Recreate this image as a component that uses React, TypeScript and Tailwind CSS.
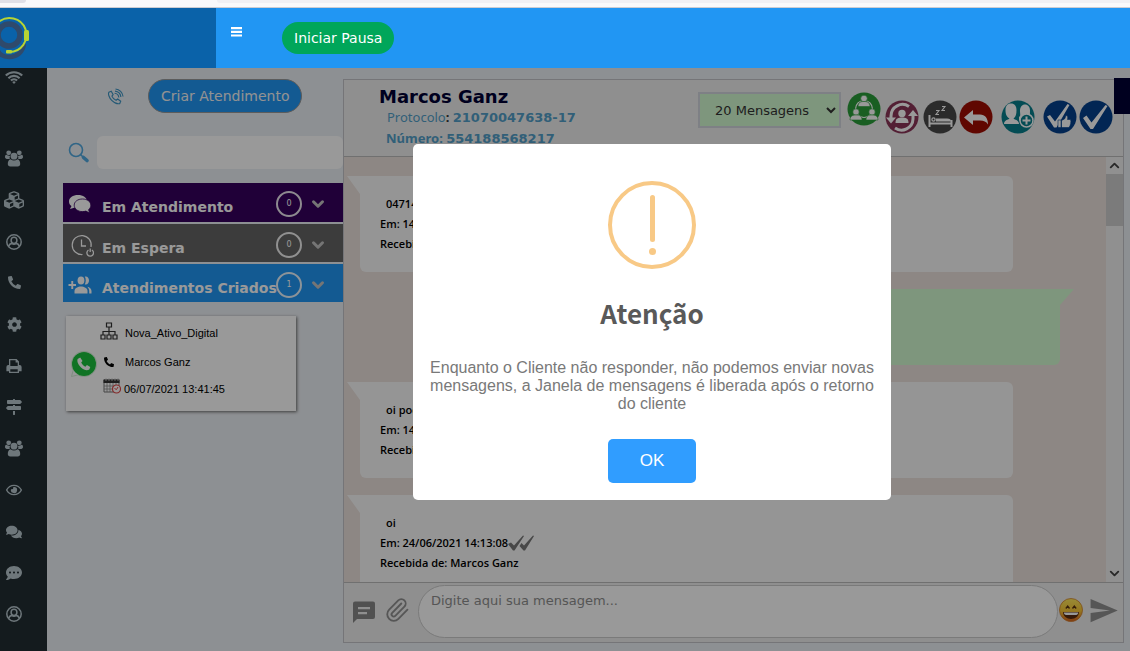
import { useState, type ReactNode } from 'react'
import { FaCubes, FaPhoneAlt, FaCog, FaMapSigns, FaRegEye, FaComments, FaCommentDots } from 'react-icons/fa'
import { MdSend } from 'react-icons/md'
import { ChevronDown, ChevronUp, Paperclip } from 'lucide-react'

type Message = {
  id: number
  side: 'in' | 'out'
  text?: string
  date?: string
  from?: string
  read?: boolean
}

const MESSAGES: Message[] = [
  { id: 1, side: 'in', text: '04714', date: '14/06/2021', from: 'Marcos Ganz' },
  { id: 2, side: 'out' },
  { id: 3, side: 'in', text: 'oi pode', date: '14/06/2021', from: 'Marcos Ganz' },
  { id: 4, side: 'in', text: 'oi', date: '24/06/2021 14:13:08', from: 'Marcos Ganz', read: true },
]

function WifiIcon() {
  return (
    <svg viewBox="0 0 18 13" className="w-[18px] h-[13px]" fill="none" stroke="currentColor" strokeWidth="2.100">
      <path d="M0.8 4.6a11.6 11.6 0 0 1 16.4 0" />
      <path d="M3.4 7.2a7.9 7.9 0 0 1 11.2 0" />
      <path d="M5.9 9.6a4.4 4.4 0 0 1 6.2 0" />
      <path d="M9 13 7.2 11.1a2.6 2.6 0 0 1 3.6 0z" fill="currentColor" stroke="none" />
    </svg>
  )
}

function UsersIcon() {
  return (
    <svg viewBox="0 0 18 17" className="w-[18px] h-[17px]" fill="currentColor">
      <circle cx="3.700" cy="2.800" r="2.400" />
      <circle cx="14.300" cy="2.800" r="2.400" />
      <path d="M5.300 5.800C4.600 6.700 4.500 7.700 4.800 8.900H1.900C.7 8.900 0 8.200 0 7.100c0-1.300.3-2.300 1.300-2.300 1.300 1 3 1.300 4 1zM12.700 5.800c.7.900.8 1.900.5 3.100h2.900c1.200 0 1.900-.7 1.900-1.800 0-1.300-.3-2.300-1.300-2.300-1.300 1-3 1.300-4 1z" />
      <circle cx="9" cy="6.200" r="3.400" />
      <path d="M5.600 9.300c2 1.600 4.800 1.600 6.800 0 2 .3 2.800 2.500 2.800 4.700 0 1.600-1 2.500-2.500 2.500H5.300c-1.500 0-2.500-.9-2.500-2.500 0-2.200.8-4.400 2.800-4.700z" />
    </svg>
  )
}

function UserCircleIcon() {
  return (
    <svg viewBox="0 0 16 16" className="w-4 h-4" fill="none" stroke="currentColor">
      <circle cx="8" cy="8" r="7.200" strokeWidth="1.500" />
      <ellipse cx="8" cy="6.300" rx="2.900" ry="3.100" strokeWidth="1.500" />
      <path d="M2.600 12.400C3.300 10.600 4.300 9.600 5.700 9.400 7 10.400 9 10.400 10.300 9.400c1.400.2 2.400 1.200 3.100 3" strokeWidth="1.600" />
    </svg>
  )
}

function PrintIcon() {
  return (
    <svg viewBox="0 0 16 16" className="w-4 h-4" fill="currentColor">
      <path fillRule="evenodd" d="M3 1h7.6L13 3.6V7h.6A2 2 0 0 1 15.6 9v4.2H13V15H3v-1.800H.4V9a2 2 0 0 1 2-2H3zM4.300 2.300V8h7.400V4.600H9.600V2.300zM4.300 11.200v2.500h7.400v-2.500z" />
    </svg>
  )
}

const MENU: { label: string; icon: ReactNode }[] = [
  { label: 'Grupos', icon: <UsersIcon /> },
  { label: 'Módulos', icon: <FaCubes size={20} /> },
  { label: 'Perfil', icon: <UserCircleIcon /> },
  { label: 'Telefone', icon: <FaPhoneAlt size={13} /> },
  { label: 'Configurações', icon: <FaCog size={15} /> },
  { label: 'Imprimir', icon: <PrintIcon /> },
  { label: 'Rotas', icon: <FaMapSigns size={16} /> },
  { label: 'Equipes', icon: <UsersIcon /> },
  { label: 'Monitorar', icon: <FaRegEye size={16} /> },
  { label: 'Conversas', icon: <FaComments size={16} /> },
  { label: 'Mensagens', icon: <FaCommentDots size={16} /> },
  { label: 'Conta', icon: <UserCircleIcon /> },
]

function Logo() {
  return (
    <svg viewBox="0 0 30 46" className="w-[30px] h-[46px]" fill="none">
      <circle cx="9" cy="20" r="11" stroke="#2f4a6c" strokeWidth="5.500" />
      <path d="M24 29c-1 8-7 13-15 13-5 0-9-2-11-6" stroke="#2f4a6c" strokeWidth="4.500" />
      <path d="M-2 7.500A17 17 0 1 1 9 37" stroke="#b7d334" strokeWidth="2" />
      <rect x="24" y="15" width="5" height="11" rx="1.500" fill="#b7d334" />
      <rect x="6" y="35" width="6" height="3.400" rx="1" fill="#b7d334" />
    </svg>
  )
}

function Header() {
  return (
    <header className="relative z-50 flex h-[60px] shrink-0 bg-[#2196f3]">
      <a href="#" aria-label="Início" className="flex w-[216px] items-center bg-[#0a62a9]">
        <Logo />
      </a>
      <button aria-label="Menu" className="ml-[15px] mt-[18px] h-3 w-[11px] text-white">
        <svg viewBox="0 0 11 10" className="w-[11px] h-[10px]" fill="currentColor">
          <path d="M0 0h11v2.200H0zM0 3.700h11v2.200H0zM0 7.400h11v2.200H0z" />
        </svg>
      </button>
      <button className="ml-10 mt-[14px] h-8 rounded-full bg-[#00a65a] px-3 text-[14px] text-white">
        Iniciar Pausa
      </button>
    </header>
  )
}

function Sidebar() {
  return (
    <aside className="flex w-[47px] shrink-0 flex-col bg-[#222d32] text-[#b8c7ce]">
      <a href="#" aria-label="Conexão" className="flex h-[19px] w-7 items-center justify-center">
        <WifiIcon />
      </a>
      <nav className="mt-[51px] flex flex-1 flex-col pb-4">
        {MENU.map((item) => (
          <a key={item.label} href="#" aria-label={item.label} className="flex w-7 flex-1 items-center justify-center">
            {item.icon}
          </a>
        ))}
      </nav>
    </aside>
  )
}

function CallIcon() {
  return (
    <svg viewBox="0 0 18 18" className="w-[17px] h-[17px]" fill="none" stroke="#3d95c4" strokeWidth="1.200">
      <path d="M4.500 3.500 2 4.500C1 6 2 10 5 13s6.500 4 8.500 3.500l1-2.500-3.200-2.300-1.800 1.300C8 12.500 5.800 10 5.200 8.600L6.500 7z" />
      <path d="M8 5.500a5 5 0 0 1 4.500 4.500M8.500 3.300a7 7 0 0 1 6.200 6.200M9 1a9 9 0 0 1 8 8" />
    </svg>
  )
}

function SearchIcon() {
  return (
    <svg viewBox="0 0 22 22" className="w-[22px] h-[22px]" fill="none" stroke="#50a8e0">
      <circle cx="8" cy="8" r="6.500" strokeWidth="1.600" />
      <path d="M12.500 12.500l3 3" strokeWidth="1.600" />
      <path d="M15.500 15.500l3.500 3" strokeWidth="3.600" strokeLinecap="round" />
    </svg>
  )
}

function BubblesIcon() {
  return (
    <svg viewBox="0 0 24 20" className="w-6 h-5">
      <path d="M10 1c5 0 9 2.600 9 6.500S15 14 10 14c-1 0-2-.1-3-.4L2 15l1.500-3C2 11 1 9.500 1 7.500 1 3.600 5 1 10 1z" fill="#fff" />
      <path d="M14.500 5c4.700 0 8.300 2.600 8.300 6.200 0 1.800-.8 3.300-2.200 4.400L21.500 19l-3.600-1.900c-1 .3-2.200.5-3.400.5-4.700 0-8.300-2.800-8.300-6.400S9.800 5 14.500 5z" fill="#fff" stroke="#36005e" strokeWidth=".8" />
    </svg>
  )
}

function WaitIcon() {
  return (
    <svg viewBox="0 0 26 24" className="w-[26px] h-6" fill="none" stroke="#fff">
      <path d="M14.500 21.500A9.500 9.500 0 1 1 23 14" strokeWidth="1.200" />
      <path d="M13.500 6.500V13H18" strokeWidth="1.300" />
      <path d="M20.500 17a3.300 3.300 0 1 0 3.400 0M22.200 15.500v3.500" strokeWidth="1.300" />
    </svg>
  )
}

function GroupAddIcon() {
  return (
    <svg viewBox="0 0 24 20" className="w-6 h-5" fill="#fff">
      <path d="M3.300 6h1.900v3H8v1.900H5.200v3H3.300v-3H.5V9h2.800z" />
      <ellipse cx="13" cy="5.500" rx="3.400" ry="4" />
      <path d="M6.500 18.500v-2.500c0-3 3.500-4.500 6.500-4.500s6.500 1.500 6.500 4.500v2.500z" />
      <path d="M16.800 1.600c2.600-.6 4.200 1.400 4.200 3.900s-1.600 4.500-4.200 3.900c1.300-2.300 1.300-5.500 0-7.800zM19.300 11.700c2.400.6 4.200 2 4.200 4.300v2.500h-2.300V16c0-1.700-.7-3.200-1.900-4.300z" />
    </svg>
  )
}

type QueueProps = { label: string; count: number; icon: ReactNode; className: string }

function Queue({ label, count, icon, className }: QueueProps) {
  return (
    <button className={`flex h-[38px] w-full items-center pt-[3px] text-left text-white ${className}`}>
      <span className="flex w-[39px] shrink-0 pl-[5px]">{icon}</span>
      <span className="min-w-0 flex-1 whitespace-nowrap pt-[6px] text-[14px] font-bold leading-5">{label}</span>
      <span className="flex size-[26px] shrink-0 items-center justify-center rounded-full border-2 border-white/90 text-[8px]">
        {count}
      </span>
      <ChevronDown size={18} strokeWidth={4} className="ml-[7px] mr-4 shrink-0 text-[#c4c4c4]" />
    </button>
  )
}

function SitemapIcon() {
  return (
    <svg viewBox="0 0 18 18" className="w-[18px] h-[18px]" fill="none" stroke="#333" strokeWidth="1.200">
      <path d="M6.500 1h5v4h-5zM9 5v8M3 13V9.500h12V13M1 13h4v4H1zM7 13h4v4H7zM13 13h4v4h-4z" />
    </svg>
  )
}

function CalendarIcon() {
  return (
    <svg viewBox="0 0 18 16" className="w-[18px] h-4" fill="none">
      <path d="M1 2h15v12H1z" fill="#fff" stroke="#777" />
      <path d="M.5 1.500h16v3.500H.5z" fill="#333" />
      <path d="M3 0v3M6 0v3M9 0v3M12 0v3M15 0v3" stroke="#ccc" strokeWidth=".8" />
      <path d="M1 8h15M1 11h15M4 5v9M7 5v9M10 5v9M13 5v9" stroke="#888" strokeWidth=".8" />
      <circle cx="13.500" cy="11" r="4" fill="#fff" stroke="#e04848" strokeWidth="1.200" />
      <path d="M11.500 10.500l2 1 1.500-2.500" stroke="#e04848" />
    </svg>
  )
}

function WhatsappIcon() {
  return (
    <svg viewBox="0 0 28 28" className="w-7 h-7">
      <path d="M14 1.500a12.500 12.500 0 1 1-6 23.400L1.500 26.500l1.700-6.200A12.500 12.500 0 0 1 14 1.500z" fill="#fff" stroke="#c8e8cc" strokeWidth=".8" />
      <circle cx="14" cy="14" r="12" fill="#1cc03c" />
      <path d="M10.200 7.500 7.600 9c-1 3 1.200 6.400 3.700 8.700s5.600 3.300 8 1.800l1-2.400-3.400-2-1.500 1.600c-1.900-.7-3.300-2.200-4.200-4.100l1.300-1.600z" fill="#fff" />
    </svg>
  )
}

function ContactCard() {
  return (
    <article className="ml-[3px] mr-[47px] mt-[14px] flex h-[95px] items-start bg-white font-['Liberation_Sans',sans-serif] text-[11px] text-black shadow-[1px_1px_3px_#666]">
      <span className="ml-1 mt-[34px]">
        <WhatsappIcon />
      </span>
      <ul className="ml-[2px] flex flex-col">
        <li className="mt-[5px] flex h-5 items-center gap-[7px]">
          <SitemapIcon />
          <span className="pt-1">Nova_Ativo_Digital</span>
        </li>
        <li className="mt-[11px] flex h-5 items-center gap-[11px] pl-1">
          <FaPhoneAlt size={10} />
          <span>Marcos Ganz</span>
        </li>
        <li className="mt-[2px] flex h-6 items-center gap-[3px] pl-[3px]">
          <CalendarIcon />
          <span className="pt-[6px]">06/07/2021 13:41:45</span>
        </li>
      </ul>
    </article>
  )
}

function QueuePanel() {
  return (
    <section className="w-[280px] shrink-0">
      <div className="flex h-[34px] items-center">
        <button aria-label="Ligar" className="ml-11">
          <CallIcon />
        </button>
        <button className="ml-6 h-[34px] rounded-full border border-[#999] bg-[#2196f3] px-3 text-[14px] text-[#f4f4f4]">
          Criar Atendimento
        </button>
      </div>
      <div className="mt-[23px] flex h-[33px] items-center">
        <label htmlFor="busca" aria-label="Buscar" className="ml-[5px] w-[29px]">
          <SearchIcon />
        </label>
        <input id="busca" type="text" className="h-full min-w-0 flex-1 rounded-md bg-white px-2 text-[13px]" />
      </div>
      <div className="mt-[14px] flex flex-col gap-[2px]">
        <Queue label="Em Atendimento" count={0} icon={<BubblesIcon />} className="h-[39px] bg-[#36005e]" />
        <Queue label="Em Espera" count={0} icon={<WaitIcon />} className="bg-[#646464]" />
        <Queue label="Atendimentos Criados" count={1} icon={<GroupAddIcon />} className="bg-[#2196f3]" />
      </div>
      <ContactCard />
    </section>
  )
}

function TeamIcon() {
  return (
    <svg viewBox="0 0 34 34" className="w-[34px] h-[34px]">
      <circle cx="17" cy="17" r="16.500" fill="#2a9d3a" />
      <circle cx="17" cy="17" r="8.500" fill="none" stroke="#fff" strokeWidth="1.200" />
      <g fill="#fff" stroke="#2a9d3a" strokeWidth=".6">
        <circle cx="17" cy="6.500" r="3.300" />
        <path d="M11 14.500c0-4 2.500-5 6-5s6 1 6 5z" />
        <circle cx="9" cy="20" r="3.200" />
        <path d="M3 28c0-4 2.500-5 6-5s6 1 6 5z" />
        <circle cx="25" cy="20" r="3.200" />
        <path d="M19 28c0-4 2.500-5 6-5s6 1 6 5z" />
      </g>
    </svg>
  )
}

function TransferIcon() {
  return (
    <svg viewBox="0 0 34 34" className="w-[34px] h-[34px]" fill="none">
      <circle cx="17" cy="17" r="16.500" fill="#8a3558" />
      <path d="M6 19V16A11.500 11.500 0 0 1 24 6.500" stroke="#fff" strokeWidth="3" />
      <path d="M28 15v4a11.500 11.500 0 0 1-18 9" stroke="#fff" strokeWidth="3" />
      <path d="M1 17.500h10L6 23.500zM23 16h10L28 10z" fill="#fff" />
      <circle cx="17" cy="13.500" r="3.700" fill="#fff" />
      <path d="M10.500 23c0-5 3-5.500 6.500-5.500s6.500.5 6.500 5.500z" fill="#fff" />
    </svg>
  )
}

function SleepIcon() {
  return (
    <svg viewBox="0 0 34 34" className="w-[34px] h-[34px]" fill="none" stroke="#fff">
      <circle cx="17" cy="17" r="16.500" fill="#484848" stroke="none" />
      <path d="M6.500 15v12M28.500 20v7M6 23.500h23" strokeWidth="2" />
      <path d="M13 21.500v-3h11c3 0 4 1 4 3z" fill="#fff" stroke="none" />
      <circle cx="10.500" cy="19.500" r="1.600" strokeWidth="1.300" />
      <path d="M13 10.500h3l-3 4h3M19 6.500h3l-3 4h3" strokeWidth="1.100" />
    </svg>
  )
}

function BackIcon() {
  return (
    <svg viewBox="0 0 34 34" className="w-[34px] h-[34px]">
      <circle cx="17" cy="17" r="16.500" fill="#a00d02" />
      <path d="M5 17.500 14 10v4.500h7c5 0 8 3.500 8 10-2-3-4-4-8-4h-7V25z" fill="#fff" />
    </svg>
  )
}

function AddPeopleIcon() {
  return (
    <svg viewBox="0 0 34 34" className="w-[34px] h-[34px]">
      <circle cx="17" cy="17" r="16.500" fill="#087f8c" />
      <path d="M18 17c2-1 1-3 1-6 0-4 2-6.500 5-6.500s5 2.500 5 6c0 3-.5 4 1.500 6l-5 4H18z" fill="#fff" />
      <path d="M3 24c0-4 4-4 5.500-5.500C5 16.500 4.500 13 4.500 10c0-4 2-6.500 5.500-6.500S15.500 6 15.500 10s-.5 6.500-3 8.500C14 20 18 20 18 24z" fill="#fff" />
      <circle cx="25.500" cy="20.500" r="6.500" fill="#087f8c" stroke="#fff" strokeWidth="1.500" />
      <path d="M25.500 16.500v8M21.500 20.500h8" stroke="#fff" strokeWidth="2" />
    </svg>
  )
}

function ApproveIcon() {
  return (
    <svg viewBox="0 0 34 34" className="w-[34px] h-[34px]">
      <circle cx="17" cy="17" r="16.500" fill="#04408c" />
      <path d="M4 16.500 7 15l5 6.500L24.500 4l2 1L13.500 27.500h-2.500z" fill="#fff" />
      <path d="M15 20h3v7.500h-3zM18.500 27V20.500l3-1.500c1-1.500 1-3 1.500-3.500 2 0 2 2 1.500 4h3c1 2 0 6-1.500 8h-6.500z" fill="#fff" stroke="#04408c" strokeWidth=".6" />
    </svg>
  )
}

function CheckIcon() {
  return (
    <svg viewBox="0 0 34 34" className="w-[34px] h-[34px]">
      <circle cx="17" cy="17" r="16.500" fill="#04408c" />
      <path d="M4 18 7.500 15.500l5 7L26.500 5l2 1L14 29h-2.500z" fill="#fff" />
    </svg>
  )
}

function ChatHeader() {
  return (
    <div className="flex h-[77px] shrink-0 items-start border-b border-[#bbb] bg-[#eee] pl-[35px] pr-[10px]">
      <div className="pt-[6px] text-[13px] font-bold leading-5 text-[#539fc9]">
        <h1 className="text-[18px] leading-[21px] text-[#000034]">Marcos Ganz</h1>
        <p className="pl-2">
          <span className="font-['Noto_Sans',sans-serif] font-normal">Protocolo</span>
          <span className="font-['Noto_Sans',sans-serif] text-[#333]">: </span>
          21070047638-17
        </p>
        <p className="pl-[7px]">
          <span className="font-['Noto_Sans',sans-serif]">Número: </span>
          554188568217
        </p>
      </div>
      <div className="ml-auto flex items-start pt-3">
        <select
          aria-label="Quantidade de mensagens"
          defaultValue="20"
          className="h-9 w-[143px] border-2 border-[#d2d6de] bg-[#d3fbd0] pl-[11px] text-[13px] text-[#333]"
        >
          <option value="20">20 Mensagens</option>
          <option value="50">50 Mensagens</option>
        </select>
        <button aria-label="Equipe" className="ml-[6px]"><TeamIcon /></button>
        <div className="mt-2 flex items-center gap-[2px]">
          <button aria-label="Transferir" className="ml-1"><TransferIcon /></button>
          <button aria-label="Adiar" className="ml-[2px]"><SleepIcon /></button>
          <button aria-label="Devolver"><BackIcon /></button>
          <button aria-label="Adicionar participante" className="ml-[6px]"><AddPeopleIcon /></button>
          <button aria-label="Aprovar" className="ml-[6px]"><ApproveIcon /></button>
          <button aria-label="Finalizar"><CheckIcon /></button>
        </div>
      </div>
    </div>
  )
}

function Bubble({ msg }: { msg: Message }) {
  if (msg.side === 'out') {
    return (
      <li className="relative ml-[76px] mr-[46px] h-[76px] shrink-0 rounded-b-md bg-[#d3fbd0]">
        <span className="absolute left-full top-0 h-4 w-[14px] bg-[#d3fbd0] [clip-path:polygon(0_0,100%_0,0_100%)]" />
      </li>
    )
  }
  return (
    <li className="relative ml-4 mr-[93px] h-24 shrink-0 rounded-md rounded-tl-none bg-[#f9f9f9] pl-5 pt-[18px] font-['Open_Sans',sans-serif] text-[11px] font-semibold leading-5 text-black">
      <span className="absolute right-full top-0 h-[18px] w-[13px] bg-[#f9f9f9] [clip-path:polygon(0_0,100%_0,100%_100%)]" />
      <p className="pl-[6px]">{msg.text}</p>
      <p className="flex items-center">
        Em: {msg.date}
        {msg.read && (
          <svg viewBox="0 0 26 16" className="h-4 w-[26px]" fill="#777">
            <path d="M0 9l3-1.500 3 3L15 .5 16 1 6.500 15.500H5zM11.500 11l2-3 2.500 2.500L25 .5l1 .5-9 14.500h-1.500z" />
          </svg>
        )}
      </p>
      <p>Recebida de: {msg.from}</p>
    </li>
  )
}

function Scrollbar() {
  return (
    <div aria-hidden="true" className="flex w-[17px] shrink-0 flex-col items-center bg-[#f0f0f0] text-[#444]">
      <ChevronUp size={15} strokeWidth={3} className="my-px shrink-0" />
      <div className="h-[52px] w-full bg-[#cdcdcd]" />
      <ChevronDown size={15} strokeWidth={3} className="mb-px mt-auto shrink-0" />
    </div>
  )
}

function NoteIcon() {
  return (
    <svg viewBox="0 0 22 22" className="w-[22px] h-[22px]" fill="#888">
      <path fillRule="evenodd" d="M2 .5h18a2 2 0 0 1 2 2V16a2 2 0 0 1-2 2H4l-4 4V2.500a2 2 0 0 1 2-2zM5 6v2.200h12V6zM5 11v2.200h9V11z" />
    </svg>
  )
}

function EmojiIcon() {
  return (
    <svg viewBox="0 0 24 24" className="w-6 h-6" fill="none">
      <defs>
        <linearGradient id="face" x1="0" y1="0" x2="0" y2="1">
          <stop offset="0" stopColor="#ffe95c" />
          <stop offset=".55" stopColor="#f8c535" />
          <stop offset="1" stopColor="#d8601c" />
        </linearGradient>
      </defs>
      <circle cx="12" cy="12" r="11.500" fill="url(#face)" stroke="#d08030" strokeWidth=".8" />
      <path d="M6.800 10.500 8.700 8 10.500 10.500M13.500 10.500 15.300 8 17.200 10.500" stroke="#5b3310" strokeWidth="1.300" />
      <path d="M4 14h16c0 4-3.500 7-8 7s-8-3-8-7z" fill="#5b2a10" />
      <path d="M4.800 14.600h14.400c0 1.600-1 2.400-2 2.400H7c-1 0-2.200-.8-2.200-2.400z" fill="#fff" />
    </svg>
  )
}

function Composer() {
  return (
    <form className="flex h-[60px] shrink-0 items-start border-t border-[#bbb] bg-[#eee] pl-[9px] pr-1 text-[#909090]">
      <button type="button" aria-label="Mensagens rápidas" className="mt-[18px]"><NoteIcon /></button>
      <button type="button" aria-label="Anexar" className="ml-[9px] mt-[14px]">
        <Paperclip size={26} strokeWidth={1.7} />
      </button>
      <textarea
        aria-label="Mensagem"
        placeholder="Digite aqui sua mensagem..."
        className="ml-2 mr-px mt-[2px] h-[53px] min-w-0 flex-1 resize-none overflow-hidden rounded-full border border-[#ccc] bg-white px-3 pt-[5px] text-[13px] leading-5 placeholder:text-[#8e8e8e]"
      />
      <button type="button" aria-label="Emojis" className="mt-[15px]"><EmojiIcon /></button>
      <button type="button" aria-label="Enviar" className="ml-[5px] mt-3"><MdSend size={31} /></button>
    </form>
  )
}

function Chat() {
  return (
    <section className="flex min-w-0 flex-1 flex-col border border-[#c4c4c8]">
      <ChatHeader />
      <div className="flex min-h-0 flex-1 bg-[#ebe1dc]">
        <ul className="flex min-w-0 flex-1 flex-col gap-[17px] overflow-hidden pt-[19px]">
          {MESSAGES.map((msg) => <Bubble key={msg.id} msg={msg} />)}
        </ul>
        <Scrollbar />
      </div>
      <Composer />
    </section>
  )
}

function Alert({ onClose }: { onClose: () => void }) {
  return (
    <div className="fixed inset-0 z-40 flex items-center justify-center bg-black/40 pb-[7px] pl-[174px]">
      <div
        role="alertdialog"
        aria-labelledby="alert-title"
        aria-describedby="alert-text"
        className="flex w-[478px] flex-col items-center rounded-[5px] bg-white px-3 pb-[17px] pt-[37px] font-['Liberation_Sans',sans-serif]"
      >
        <div className="flex size-[88px] flex-col items-center rounded-full border-4 border-[#f8c986] pt-[10px]">
          <span className="h-[47px] w-[5px] rounded-sm bg-[#f8c986]" />
          <span className="mt-[6px] size-[7px] rounded-full bg-[#f8c986]" />
        </div>
        <h2 id="alert-title" className="mt-6 font-['Noto_Sans_CJK_SC',sans-serif] text-[26px] font-bold leading-10 text-[#595959]">
          Atenção
        </h2>
        <p id="alert-text" className="mt-[26px] text-center text-[16px] leading-[18px] text-[#797979]">
          Enquanto o Cliente não responder, não podemos enviar novas mensagens, a Janela de mensagens é liberada após o retorno do cliente
        </p>
        <button onClick={onClose} className="mt-[26px] h-11 rounded-[5px] bg-[#309dff] px-8 text-[17px] text-white">
          OK
        </button>
      </div>
    </div>
  )
}

export default function App() {
  const [alertOpen, setAlertOpen] = useState(true)

  return (
    <div className="flex h-screen min-h-[640px] flex-col overflow-hidden bg-[#ecf0f5] font-['DejaVu_Sans',Verdana,sans-serif]">
      <div className="relative z-50 flex h-2 shrink-0 justify-between border-b border-[#ccccd2] bg-[#f9f9fb]">
        <span className="h-[3px] w-[26px] rounded-br bg-[#e0e0e7]" />
        <span className="ml-[191px] h-[3px] flex-1 rounded-bl bg-[#f0f0f4]" />
      </div>
      <Header />
      <div className="flex min-h-0 flex-1">
        <Sidebar />
        <main className="relative flex min-w-0 flex-1 pb-2 pl-4 pr-[6px] pt-[11px]">
          <QueuePanel />
          <Chat />
          <button aria-label="Painel lateral" className="absolute right-0 top-[10px] h-9 w-4 bg-[#000034]" />
        </main>
      </div>
      {alertOpen && <Alert onClose={() => setAlertOpen(false)} />}
    </div>
  )
}
